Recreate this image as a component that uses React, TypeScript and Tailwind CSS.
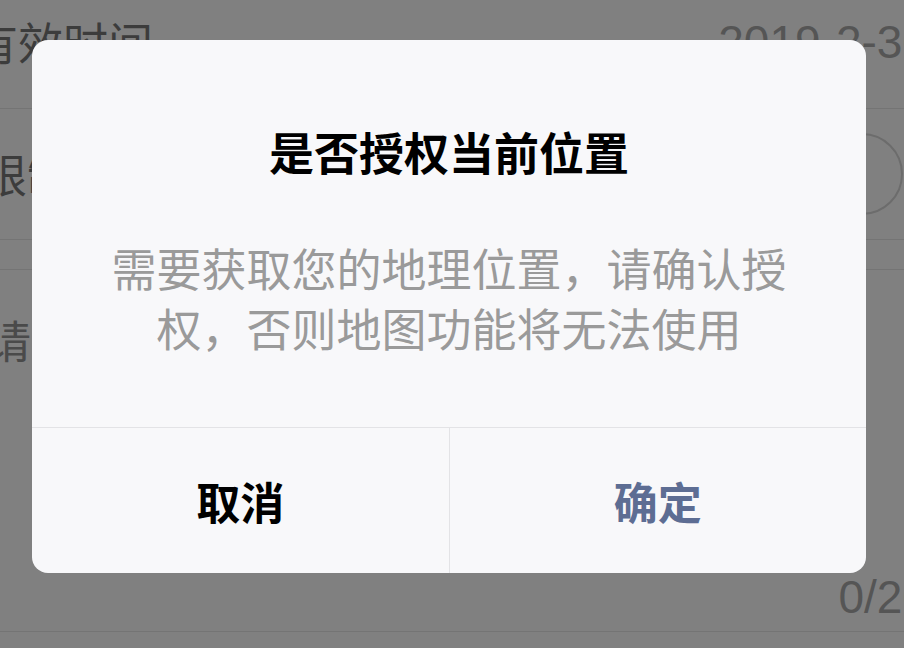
import React from "react";

const cjk = { fontFamily: '"Noto Sans CJK SC", "Noto Sans", sans-serif' };
const num = { fontFamily: '"Liberation Sans", "Noto Sans CJK SC", sans-serif' };

export default function App() {
  return (
    <div className="relative w-[904px] h-[648px] overflow-hidden bg-[#808080]" style={cjk}>
      {/* background page (dimmed) */}
      <div className="flex flex-col">
        <div className="flex h-[109px] items-start justify-between border-b border-[#747474] pt-[12px]">
          <span className="ml-[-27px] text-[45px] leading-[60px] text-[#3c3c3c]">有效时间</span>
          <span className="mr-[-24px] text-[46px] leading-[60px] text-[#555555]" style={num}>2019-2-30</span>
        </div>
        <div className="flex h-[131px] items-center justify-between border-b border-[#747474]">
          <span className="ml-[-18px] text-[45px] leading-[60px] text-[#3c3c3c]">限制</span>
          <div className="mr-[1px] h-[82px] w-[140px] rounded-full border-2 border-[#6c6c6c]" />
        </div>
        <div className="h-[30px] border-b border-[#747474]" />
        <div className="flex h-[362px] flex-col justify-between border-b border-[#747474] pt-[40px] pb-[4px]">
          <span className="ml-[-14px] text-[45px] leading-[60px] text-[#4a4a4a]">请输入备注</span>
          <span className="mr-[-24px] self-end text-[46px] leading-[60px] text-[#555555]" style={num}>0/20</span>
        </div>
      </div>

      {/* dialog */}
      <div className="absolute left-[32px] top-[40px] flex w-[834px] flex-col overflow-hidden rounded-[16px] bg-[#f8f8fa]">
        <div className="flex flex-col items-center px-[60px] pt-[82px] pb-[69px]">
          <div className="text-[45px] font-bold leading-[60px] text-black">是否授权当前位置</div>
          <div className="mt-[56px] text-center text-[45px] leading-[60px] text-[#9a9a9a]">
            需要获取您的地理位置，请确认授权，否则地图功能将无法使用
          </div>
        </div>
        <div className="flex h-[146px] border-t border-[#e3e3e6]">
          <div className="flex flex-1 items-center justify-center border-r border-[#e3e3e6] text-[44px] font-bold text-black">
            取消
          </div>
          <div className="flex flex-1 items-center justify-center text-[44px] font-bold text-[#5d6d93]">
            确定
          </div>
        </div>
      </div>
    </div>
  );
}
